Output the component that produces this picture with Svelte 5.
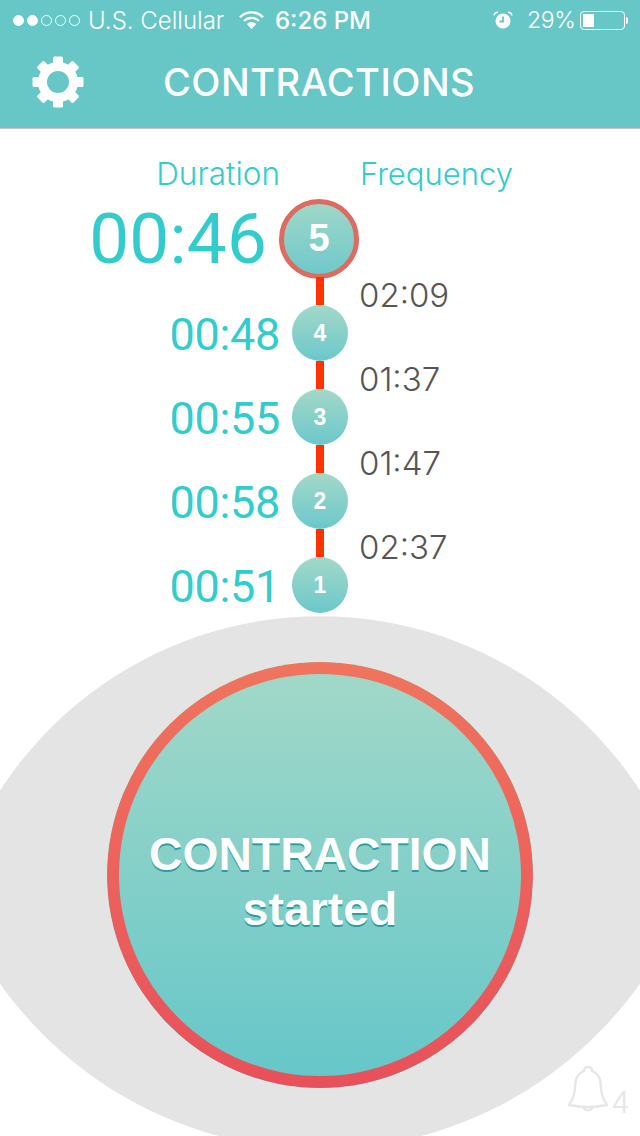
<script>
  const rows = [
    { n: 4, d: '00:48', f: '02:09' },
    { n: 3, d: '00:55', f: '01:37' },
    { n: 2, d: '00:58', f: '01:47' },
    { n: 1, d: '00:51', f: '02:37' }
  ];
  const teeth = [0, 45, 90, 135, 180, 225, 270, 315];
  const dots = [true, true, false, false, false];
</script>

<div class="app">
  <svg class="lens" width="640" height="1136" viewBox="0 0 640 1136" aria-hidden="true">
    <path d="M-47 895 A381 381 0 0 1 687 895 A392 392 0 0 1 -47 895 Z" fill="#e4e4e4" />
  </svg>

  <header class="head">
    <div class="status">
      <div class="signal">
        {#each dots as on}
          <span class="dot" class:on></span>
        {/each}
      </div>
      <span class="carrier">U.S. Cellular</span>
      <svg class="wifi" width="25" height="18" viewBox="0 0 25 18" aria-hidden="true">
        <path d="M1 6.2 A16 16 0 0 1 24 6.2" fill="none" stroke="#fff" stroke-width="2.3" />
        <path d="M5 10 A10.6 10.6 0 0 1 20 10" fill="none" stroke="#fff" stroke-width="2.3" />
        <path d="M12.5 18 L7.8 13 A6.6 6.6 0 0 1 17.2 13 Z" fill="#fff" />
      </svg>
      <span class="clock">6:26 PM</span>
      <svg class="alarm" width="20" height="18" viewBox="0 0 20 18" aria-hidden="true">
        <circle cx="10" cy="10" r="7.5" fill="#fff" />
        <path d="M10 5.5 V10.5 H6.5" fill="none" stroke="#66c7c6" stroke-width="1.8" />
        <path d="M1 4.5 A4 4 0 0 1 5 1.2 M15 1.2 A4 4 0 0 1 19 4.5" fill="none" stroke="#fff" stroke-width="1.4" />
      </svg>
      <span class="pct">29%</span>
      <div class="battery"><div class="level"></div></div>
      <div class="tip"></div>
    </div>
    <div class="nav">
      <svg class="gear" width="52" height="52" viewBox="-26 -26 52 52" aria-hidden="true">
        {#each teeth as t}
          <rect x="-5" y="-25.5" width="10" height="12" rx="1.5" fill="#fff" transform="rotate({t})" />
        {/each}
        <circle r="15.5" fill="none" stroke="#fff" stroke-width="9" />
      </svg>
      <h1>CONTRACTIONS</h1>
    </div>
  </header>

  <main class="timeline">
    <div class="labels">
      <span class="lab-d">Duration</span>
      <span class="lab-f">Frequency</span>
    </div>
    <div class="current">
      <span class="big">00:46</span>
      <div class="node large">5</div>
    </div>
    {#each rows as r}
      <div class="row">
        <span class="dur">{r.d}</span>
        <div class="stem">
          <div class="seg"></div>
          <div class="node">{r.n}</div>
        </div>
        <span class="freq">{r.f}</span>
      </div>
    {/each}
  </main>

  <button class="main">
    <span class="l1">CONTRACTION</span>
    <span class="l2">started</span>
  </button>

  <div class="bell">
    <svg width="42" height="48" viewBox="0 0 42 48" aria-hidden="true">
      <path d="M17 6 Q17 2 21 2 Q25 2 25 6 Q33 9 33.500 18 C34 29 36 35 40 40 Q21 44 2 40 C6 35 8 29 8.500 18 Q9 9 17 6 Z" fill="none" stroke="#e6e6e6" stroke-width="2.4" stroke-linejoin="round" />
      <path d="M16 42.500 Q21 48 26 42.500" fill="none" stroke="#e6e6e6" stroke-width="2.400" />
    </svg>
    <span>4</span>
  </div>
</div>

<style>
  :global(body) { margin: 0; background: #fff; }
  .app {
    position: relative;
    width: 640px;
    height: 1136px;
    overflow: hidden;
    background: #fff;
    font-family: Inter, "Liberation Sans", sans-serif;
  }
  .lens { position: absolute; left: 0; top: 0; }

  .head {
    position: relative;
    height: 128px;
    background: #66c7c6;
    border-bottom: 1px solid #c4c4c4;
    color: #fff;
  }
  .status {
    height: 40px;
    display: flex;
    align-items: center;
    font-size: 24px;
    font-weight: 300;
    padding-left: 13px;
  }
  .signal { display: flex; gap: 3px; width: 75px; }
  .dot {
    width: 11px;
    height: 11px;
    box-sizing: border-box;
    border-radius: 50%;
    border: 1.5px solid #fff;
  }
  .dot.on { background: #fff; }
  .carrier { width: 151px; white-space: nowrap; }
  .wifi { margin-right: 11px; }
  .clock { width: 218px; font-weight: 500; white-space: nowrap; }
  .alarm { margin-right: 14px; }
  .pct { width: 53px; font-size: 23px; letter-spacing: -0.3px; white-space: nowrap; }
  .battery {
    width: 45px;
    height: 19px;
    box-sizing: border-box;
    border: 1.5px solid #fff;
    border-radius: 4px;
    padding: 2px;
  }
  .level { width: 11px; height: 100%; background: #fff; }
  .tip { width: 2px; height: 7px; background: #fff; margin-left: 1px; border-radius: 0 2px 2px 0; }

  .nav {
    height: 88px;
    display: flex;
    align-items: center;
    padding-left: 32px;
    padding-bottom: 4px;
    box-sizing: border-box;
  }
  .gear { flex: none; }
  h1 {
    margin: 0 0 0 79px;
    font-size: 38px;
    font-weight: 450;
    letter-spacing: 0.5px;
    white-space: nowrap;
  }

  .timeline {
    position: relative;
    width: 640px;
    padding-top: 22px;
  }
  .labels {
    display: grid;
    grid-template-columns: 280px 80px 280px;
    height: 44px;
    align-items: center;
    font-weight: 300;
    color: #33cccc;
  }
  .lab-d { grid-column: 1; text-align: right; font-size: 31.5px; }
  .lab-f { grid-column: 3; font-size: 31px; }
  .current {
    display: grid;
    grid-template-columns: 280px 80px 280px;
    align-items: center;
    height: 80px;
    margin-top: 2px;
  }
  .big {
    text-align: right;
    font-family: Roboto, Inter, sans-serif;
    font-size: 71px;
    font-weight: 400;
    letter-spacing: 0.2px;
    color: #33cccc;
    padding-right: 13px;
    white-space: nowrap;
  }
  .row {
    display: grid;
    grid-template-columns: 280px 80px 280px;
    height: 84px;
  }
  .dur {
    align-self: end;
    height: 56px;
    line-height: 60px;
    text-align: right;
    font-family: Roboto, Inter, sans-serif;
    font-size: 45px;
    font-weight: 400;
    letter-spacing: -0.3px;
    color: #33cccc;
    white-space: nowrap;
  }
  .stem { display: flex; flex-direction: column; align-items: center; }
  .seg { width: 8px; height: 28px; background: #ff3300; flex: none; }
  .freq {
    height: 36px;
    line-height: 36px;
    margin-left: -1px;
    font-size: 33px;
    font-weight: 340;
    color: #555;
  }
  .node {
    flex: none;
    width: 56px;
    height: 56px;
    border-radius: 50%;
    background: linear-gradient(#a3d8c8, #6bc8cb);
    color: #fff;
    font: bold 23px "Liberation Sans", sans-serif;
    display: flex;
    align-items: center;
    justify-content: center;
  }
  .node.large {
    width: 80px;
    height: 80px;
    box-sizing: border-box;
    border: 5px solid #dd6b60;
    font-size: 38px;
    margin-left: -1px;
    background-origin: border-box;
  }

  .main {
    position: relative;
    display: flex;
    flex-direction: column;
    align-items: center;
    justify-content: center;
    width: 426px;
    height: 426px;
    margin: 49px 0 0 107px;
    padding: 14px 0 0;
    box-sizing: border-box;
    border: none;
    border-radius: 50%;
    background: linear-gradient(#a3d9c8, #64c6c9);
    color: #fff;
    font-family: "Liberation Sans", sans-serif;
    font-weight: bold;
    text-shadow: 0 2px 0 #2a9ea3;
  }
  .main::before {
    content: "";
    position: absolute;
    inset: 0;
    border-radius: 50%;
    padding: 12px;
    background: linear-gradient(#f0745e, #e8505a);
    -webkit-mask: linear-gradient(#000 0 0) content-box, linear-gradient(#000 0 0);
    -webkit-mask-composite: xor;
    mask-composite: exclude;
  }
  .l1 { font-size: 46.3px; line-height: 55px; }
  .l2 { font-size: 46.3px; line-height: 55px; }

  .bell {
    position: absolute;
    left: 567px;
    top: 1065px;
    display: flex;
    align-items: flex-end;
    color: #e6e6e6;
  }
  .bell svg { flex: none; }
  .bell span {
    font-size: 30px;
    font-weight: 300;
    line-height: 28px;
    margin: 0 0 -3px 2px;
  }
</style>
